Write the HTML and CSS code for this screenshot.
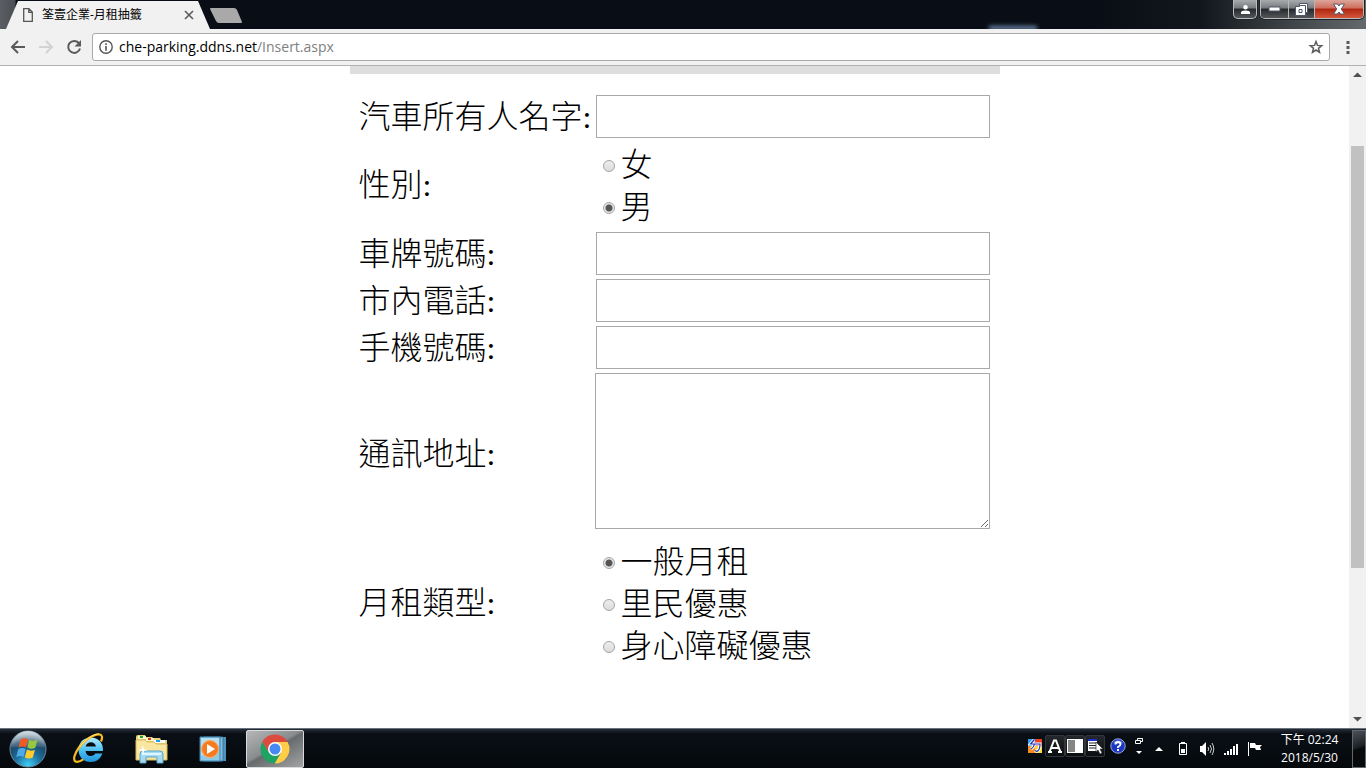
FILE: index.html
```
<!DOCTYPE html>
<html lang="zh-Hant">
<head>
	<meta charset="UTF-8">
	<title>筌壹企業-月租抽籤</title>
	<link rel="stylesheet" href="styles.css">
</head>
<body>
	<header class="titlebar">
		<div class="tab">
			<svg class="tab-icon" width="10" height="14" viewBox="0 0 10 14"><path d="M.7.7h5.2l3.4 3.4v9.2H.7zM5.8.8v3.5h3.5" fill="none" stroke="#555" stroke-width="1.3"/></svg>
			<span class="tab-title">筌壹企業-月租抽籤</span>
			<button class="tab-close" aria-label="關閉分頁"><svg width="10" height="10" viewBox="0 0 10 10"><path d="M1 1l8 8M9 1L1 9" stroke="#5a5a5a" stroke-width="1.6"/></svg></button>
		</div>
		<button class="new-tab" aria-label="新分頁"><svg width="34" height="17" viewBox="0 0 34 17"><path d="M1 1h23q2 0 3 2l5 12q0 1-1 1H9q-2 0-3-2L0 2q0-1 1-1z" fill="#a9a9a9"/></svg></button>
		<div class="glow"></div>
		<button class="win user" aria-label="使用者"><svg width="11" height="11" viewBox="0 0 11 11"><path d="M5.500 1a2.300 2.300 0 0 1 0 4.600A2.300 2.300 0 0 1 5.500 1zM1 10V8.500Q1 6.500 5.500 6.500T10 8.500V10z" fill="#fff"/></svg></button>
		<div class="win-group">
			<button class="win" aria-label="最小化"><svg width="13" height="6" viewBox="0 0 13 6"><path d="M1 1h11v4H1z" fill="#fff" stroke="#535669"/></svg></button>
			<button class="win" aria-label="還原"><svg width="13" height="13" viewBox="0 0 13 13"><path d="M4.500.500h8v9h-2v3h-10v-9h4z" fill="#fff" stroke="#535669"/><path d="M4 6.500h3v3H4zM4.500 2.500h6v7" fill="none" stroke="#535669"/></svg></button>
			<button class="win close" aria-label="關閉"><svg width="14" height="12" viewBox="0 0 14 12"><path d="M1.500 1h4L7 3l1.500-2h4L9.300 6l3.200 5h-4L7 9l-1.500 2h-4l3.200-5z" fill="#fff" stroke="#535669"/></svg></button>
		</div>
	</header>

	<nav class="toolbar">
		<button aria-label="上一頁"><svg width="16" height="16" viewBox="0 0 16 16"><path d="M15 8H2.500M8 2L2 8l6 6" fill="none" stroke="#5a5a5a" stroke-width="2"/></svg></button>
		<button aria-label="下一頁" disabled><svg width="16" height="16" viewBox="0 0 16 16"><path d="M1 8h12.500M8 2l6 6-6 6" fill="none" stroke="#d3d3d3" stroke-width="2"/></svg></button>
		<button aria-label="重新載入"><svg width="16" height="16" viewBox="0 0 16 16"><path d="M12.800 4A6 6 0 1 0 14 9.500" fill="none" stroke="#5a5a5a" stroke-width="2"/><path d="M15 1v6.500H8.500z" fill="#5a5a5a"/></svg></button>
		<div class="omnibox">
			<svg width="14" height="14" viewBox="0 0 14 14"><circle cx="7" cy="7" r="6.200" fill="none" stroke="#555" stroke-width="1.400"/><path d="M6.200 3.300h1.600v1.600H6.200zM6.200 6h1.600v4.700H6.200z" fill="#555"/></svg>
			<div class="url" role="textbox" aria-label="網址" contenteditable="true" spellcheck="false">che-parking.ddns.net<span class="path">/Insert.aspx</span></div>
			<button aria-label="加入書籤"><svg width="16" height="16" viewBox="0 0 16 16"><path d="M8 2.500l1.500 3.900 4.200.3-3.200 2.600 1 4L8 11l-3.500 2.300 1-4-3.200-2.600 4.200-.3z" fill="none" stroke="#5a5a5a" stroke-width="1.500"/></svg></button>
		</div>
		<button class="menu" aria-label="選單"><svg width="4" height="14" viewBox="0 0 4 14"><path d="M.500 1h3v3h-3zM.500 6h3v3h-3zM.500 11h3v3h-3z" fill="#5a5a5a"/></svg></button>
	</nav>

	<div class="viewport">
		<main>
			<form class="panel">
				<label for="owner">汽車所有人名字:</label>
				<input type="text" id="owner">

				<span class="caption" id="sex">性別:</span>
				<div class="options" role="radiogroup" aria-labelledby="sex">
					<label><input type="radio" name="sex">女</label>
					<label><input type="radio" name="sex" checked>男</label>
				</div>

				<label for="plate">車牌號碼:</label>
				<input type="text" id="plate">

				<label for="tel">市內電話:</label>
				<input type="text" id="tel">

				<label for="mobile">手機號碼:</label>
				<input type="text" id="mobile">

				<label for="address">通訊地址:</label>
				<textarea id="address"></textarea>

				<span class="caption" id="rent">月租類型:</span>
				<div class="options" role="radiogroup" aria-labelledby="rent">
					<label><input type="radio" name="rent" checked>一般月租</label>
					<label><input type="radio" name="rent">里民優惠</label>
					<label><input type="radio" name="rent">身心障礙優惠</label>
				</div>
			</form>
		</main>
		<div class="scrollbar">
			<svg width="17" height="17" viewBox="0 0 17 17"><path d="M4 11l4.500-4.500L13 11z" fill="#505050"/></svg>
			<div class="track"><div class="thumb"></div></div>
			<svg width="17" height="17" viewBox="0 0 17 17"><path d="M4 6l4.500 4.500L13 6z" fill="#505050"/></svg>
		</div>
	</div>

	<footer class="taskbar">
		<button class="start" aria-label="開始">
			<svg width="38" height="38" viewBox="0 0 38 38">
				<defs>
					<radialGradient id="orb" cx=".5" cy=".95" r=".9"><stop offset="0" stop-color="#3fd0f5"/><stop offset=".4" stop-color="#1d6f9f"/><stop offset=".75" stop-color="#1c4565"/><stop offset="1" stop-color="#8ba5b5"/></radialGradient>
					<linearGradient id="gloss" x2="0" y2="1"><stop offset="0" stop-color="#fff" stop-opacity=".6"/><stop offset="1" stop-color="#fff" stop-opacity=".1"/></linearGradient>
				</defs>
				<circle cx="19" cy="19" r="18" fill="url(#orb)" stroke="#6d8899"/>
				<path d="M2 18a17 17 0 0 1 34 0q-17-5-34 0z" fill="url(#gloss)"/>
				<path d="M11.500 9.500q4-2.500 7.500-.3L17 17.500q-3.500-2-7.500.3z" fill="#ef5a25"/>
				<path d="M20.200 9.800q4 2 8.300-.3l-2.200 8.200q-4 2.300-8-.1z" fill="#97c93c"/>
				<path d="M9.200 19.300q4-2.200 7.500-.3l-2.200 8q-3.500-2-7.300.2z" fill="#4fa8e8"/>
				<path d="M18 19.500q4 2.200 8 .2l-2.200 7.800q-4 2.300-8-.2z" fill="#ffcb2f"/>
			</svg>
		</button>
		<button aria-label="Internet Explorer">
			<svg width="34" height="34" viewBox="0 0 34 34">
				<defs><linearGradient id="ie" x2="0" y2="1"><stop offset="0" stop-color="#b5ecff"/><stop offset=".5" stop-color="#4fc3f3"/><stop offset="1" stop-color="#1e92dc"/></linearGradient></defs>
				<path d="M31 19H13.500c.3 3 2.300 5 5.300 5 2.200 0 3.700-1 4.500-2.500h7C28.700 26.700 24.500 30 18.700 30 11.700 30 6.500 25 6.500 17.700S11.700 5.500 18.700 5.500C26.500 5.500 31.500 11 31 19zM13.600 14.500h10.300c-.3-2.500-2.300-4.200-5-4.200s-4.700 1.700-5.300 4.200z" fill="url(#ie)"/>
				<path d="M29 9.500c2-4.500 1-7-2-7.200C21.500 2 12.500 8 7 15.500 2.500 21.500.800 27.500 3.300 29.300c1.700 1.200 4.700.2 8-2" fill="none" stroke="#f8ba1c" stroke-width="2.200"/>
				<path d="M27 2C21 2 12.500 8 7.500 15" fill="none" stroke="#ffe56b"/>
			</svg>
		</button>
		<button aria-label="檔案總管">
			<svg width="34" height="32" viewBox="0 0 34 32">
				<path d="M2 4q0-2 2-2h7l1 2h6l1 1h7l1 2h6v20H2z" fill="#e8cf7b"/>
				<path d="M4 3h8v3H4z" fill="#fff6c9"/><path d="M6 3h3v2H6z" fill="#19a52c"/>
				<path d="M12 5h8v3h-8z" fill="#fff6c9"/><path d="M14 5h3v2h-3z" fill="#d53a23"/>
				<path d="M20 7h11v3H20z" fill="#fff"/><path d="M22 7h4v2h-4z" fill="#229ded"/>
				<path d="M2 7h9l2 2h7l2 2h11v16H2z" fill="#f9e6a0" stroke="#d8b95c"/>
				<path d="M6 30V21q0-3 3-3h17q3 0 3 3v9h-6v-6H12v6z" fill="#a5daf3" stroke="#5aa3cc"/>
				<path d="M8 20h19v2H8z" fill="#e0f6ff"/>
				<path d="M9 12l1 4 4 1-4 1-1 4-1-4-4-1 4-1z" fill="#fff"/>
			</svg>
		</button>
		<button aria-label="媒體播放程式">
			<svg width="28" height="26" viewBox="0 0 28 26">
				<path d="M7 1h20v24H7z" fill="#4e94bb"/>
				<path d="M5 1h19v24H5z" fill="#84bedc" stroke="#3679a3"/>
				<path d="M1 1h20v24H1z" fill="#8ecae6" stroke="#3c84af"/>
				<path d="M2 2h18v8L2 20z" fill="#b7dff0"/>
				<circle cx="11" cy="13" r="8.500" fill="#f47b20" stroke="#ffae67"/>
				<path d="M8 8l8 5-8 5z" fill="#fff"/>
			</svg>
		</button>
		<button class="active" aria-label="Google Chrome">
			<svg width="30" height="30" viewBox="0 0 30 30">
				<path d="M15 15L2.400 7.700A14.500 14.500 0 0 1 27.600 8H15z" fill="#dd4b3e"/>
				<path d="M27.600 8A14.500 14.500 0 0 1 14.500 29.500L21 18.500 15 8z" fill="#ffcd46"/>
				<path d="M2.400 7.700A14.500 14.500 0 0 0 14.500 29.500L21 18.500 9 18.500z" fill="#1da362"/>
				<path d="M2.400 7.700L9 18.500 15 8z" fill="#dd4b3e"/>
				<circle cx="15" cy="15" r="7" fill="#fff"/>
				<circle cx="15" cy="15" r="5.500" fill="#4688f4"/>
			</svg>
		</button>

		<div class="langbar">
			<button aria-label="輸入法"><svg width="14" height="14" viewBox="0 0 14 14"><path d="M0 0h7v7H0z" fill="#2f9ff5"/><path d="M7 0h7v7H7z" fill="#f04022"/><path d="M0 7h7v7H0z" fill="#f58a1f"/><path d="M7 7h7v7H7z" fill="#ffd82e"/><path d="M6 1L2.500 5H12q0 6-3 7.500L7 11.500M6.500 5Q6 8 3 10" fill="none" stroke="#fff" stroke-width="3"/><path d="M6 1L2.500 5H12q0 6-3 7.500L7 11.500M6.500 5Q6 8 3 10" fill="none" stroke="#1a35b8" stroke-width="1.200"/></svg></button>
			<button class="boxed" aria-label="英數"><svg width="14" height="14" viewBox="0 0 14 14"><path d="M1.500 13L6 1.500h2L12.500 13M3.500 9h7M0 13h4M10 13h4" fill="none" stroke="#fff" stroke-width="2"/></svg></button>
			<button class="boxed" aria-label="半形"><svg width="16" height="14" viewBox="0 0 16 14"><path d="M0 0h16v14H0z" fill="#fff"/><path d="M1 1h7v12H1z" fill="#858585"/></svg></button>
			<button class="boxed" aria-label="功能表"><svg width="16" height="16" viewBox="0 0 16 16"><path d="M1 1h9v12H1z" fill="#fff"/><path d="M1 2h9" stroke="#1d32c4" stroke-width="2"/><path d="M2 5h7M2 7.500h7M2 10h7" stroke="#222"/><path d="M9 4v10l2-2 2 4 2-1-2-4h3z" fill="#fff" stroke="#333" stroke-width=".7"/></svg></button>
			<button class="help" aria-label="說明"><svg width="16" height="16" viewBox="0 0 16 16"><circle cx="8" cy="8" r="7.200" fill="#1a37c4" stroke="#9ba9d8"/><path d="M3 5a6 6 0 0 1 10 0q-5 2-10 0z" fill="#5c73dc"/><path d="M5.500 6.500Q5.500 4 8 4t2.500 2.200Q10.500 7.500 8 9v1M8 11v2" fill="none" stroke="#fff" stroke-width="1.900"/></svg></button>
			<button class="restore" aria-label="還原語言列"><svg width="10" height="18" viewBox="0 0 10 18"><path d="M3.500 3.500v-2h5v3h-2M1.500 3.500h5v3h-5z" fill="none" stroke="#fff"/><path d="M2 14h6l-3 3z" fill="#fff"/></svg></button>
		</div>
		<div class="tray">
			<button aria-label="顯示隱藏的圖示"><svg width="8" height="4" viewBox="0 0 8 4"><path d="M0 4l4-4 4 4z" fill="#fff"/></svg></button>
			<button aria-label="電池"><svg width="10" height="14" viewBox="0 0 10 14"><path d="M3 0h4v2H3zM3 7h4v4H3z" fill="#fff"/><path d="M1.500 1.500h7v11h-7z" fill="none" stroke="#fff"/></svg></button>
			<button aria-label="音量"><svg width="15" height="14" viewBox="0 0 15 14"><path d="M0 4h2l4-4v14l-4-4H0z" fill="#fff"/><path d="M8 5q1.500 2 0 4M10 3q3 4 0 8M12 1q3.500 6 0 12" fill="none" stroke="#ccc"/></svg></button>
			<button aria-label="網路"><svg width="14" height="12" viewBox="0 0 14 12"><path d="M0 10h2v2H0zM3 8h2v4H3zM6 6h2v6H6zM9 3h2v9H9zM12 1h2v11h-2z" fill="#fff"/></svg></button>
			<button aria-label="重要訊息"><svg width="14" height="14" viewBox="0 0 14 14"><path d="M0 0h1v14H0zM2 1h5l1 2h6l-2 2 1 3H8L7 6H2z" fill="#fff"/></svg></button>
		</div>
		<div class="clock"><span>下午 02:24</span><span>2018/5/30</span></div>
		<button class="desktop" aria-label="顯示桌面"></button>
	</footer>
</body>
</html>
```
FILE: styles.css
```
* {
	box-sizing: border-box;
}

body {
	margin: 0;
	height: 100vh;
	display: flex;
	flex-direction: column;
	overflow: hidden;
	font-family: "Open Sans", "Noto Sans CJK TC", sans-serif;
	background: #fff;
}

button {
	display: flex;
	align-items: center;
	justify-content: center;
	padding: 0;
	border: 0;
	background: none;
}

svg {
	display: block;
	flex: none;
}

/* title bar */
.titlebar {
	display: flex;
	flex: none;
	align-items: flex-start;
	height: 29px;
	padding: 0 2px 0 6px;
	overflow: hidden;
	background: linear-gradient(to right, #5b5f63, #4a4e52 15px, transparent 16px), linear-gradient(to right, #090e16 80%, #12171d 88%, #43484c 95%, #64696c);
}

.tab {
	display: flex;
	align-items: center;
	width: 204px;
	height: 29px;
	padding: 0 16px 0 17px;
	background: #f2f1f2;
	clip-path: polygon(0 100%, 12px 1px, 192px 1px, 100% 100%);
}

.tab-title {
	flex: 1;
	margin-left: 9px;
	font-size: 12px;
	line-height: 16px;
	color: #000;
}

.new-tab {
	margin-top: 7px;
}

.glow {
	width: 48px;
	height: 4px;
	margin: 26px 196px 0 auto;
	background: #6d8cad;
	filter: blur(2px);
}

.win {
	width: 26px;
	height: 18px;
	background: linear-gradient(#a8abad, #77797c 45%, #25282c 50%, #55585b);
	border-right: 1px solid #b5b7b9;
}

.user, .win-group {
	height: 19px;
	border: 1px solid #b9bbbc;
	border-top: 0;
	border-radius: 0 0 5px 5px;
	box-shadow: 0 0 0 1px #202327;
}

.user {
	width: 24px;
	margin-right: 3px;
}

.win-group {
	display: flex;
	overflow: hidden;
}

.win-group .win:first-child {
	width: 28px;
}

.win-group .close {
	width: 48px;
	border-right: 0;
	background: linear-gradient(#dda59a, #cf6e5c 45%, #b02610 50%, #d4573c);
}

/* toolbar */
.toolbar {
	display: flex;
	flex: none;
	align-items: center;
	height: 37px;
	padding: 0 10px;
	border-bottom: 1px solid #b2b2b2;
	background: #f2f1f2;
}

.toolbar > button {
	width: 16px;
	margin-right: 12px;
}

.omnibox {
	display: flex;
	flex: 1;
	align-items: center;
	height: 28px;
	margin-left: -2px;
	padding: 0 5px 0 6px;
	border: 1px solid #a9a9a9;
	border-radius: 3px;
	background: #fff;
}

.url {
	flex: 1;
	margin-left: 6px;
	font-size: 14px;
	line-height: 20px;
	color: #000;
	outline: 0;
}

.path {
	color: #808080;
}

.toolbar .menu {
	margin: 0 0 0 10px;
}

/* page */
.viewport {
	display: flex;
	flex: 1;
	min-height: 0;
}

main {
	flex: 1;
	overflow: hidden;
}

.panel {
	display: grid;
	grid-template-columns: max-content 1fr;
	gap: 4px;
	align-items: center;
	max-width: 650px;
	margin: 0 auto;
	padding: 21px 10px 0 9px;
	border-top: 8px solid #ddd;
	font-family: "Liberation Serif", "Noto Sans CJK TC", serif;
	font-size: 32px;
	font-weight: 300;
	line-height: 42px;
	white-space: nowrap;
	color: #000;
}

.panel input[type="text"] {
	min-width: 0;
	height: 43px;
	margin-left: 1px;
	padding: 1px 2px;
	border: 1px solid #a9a9a9;
	font: inherit;
}

textarea {
	min-width: 0;
	height: 156px;
	margin: 0 0 6px;
	padding: 2px;
	border: 1px solid #a9a9a9;
	font: inherit;
	resize: both;
}

.options {
	padding: 2px 0 0 8px;
}

.options label {
	display: flex;
	align-items: center;
}

.options input {
	appearance: none;
	width: 12px;
	height: 12px;
	margin: 2px 5px 0 0;
	border: 1px solid #a5a5a5;
	border-radius: 50%;
	background: linear-gradient(#ededed, #dcdcdc);
}

.options input:checked {
	background: radial-gradient(circle, #555 3px, #e6e6e6 4px);
}

.scrollbar {
	display: flex;
	flex-direction: column;
	width: 17px;
	background: #f1f1f1;
}

.track {
	flex: 1;
	display: grid;
	grid-template-rows: 63fr 422fr 143fr;
}

.thumb {
	grid-row: 2;
	margin: 0 2px;
	background: #c1c1c1;
}

/* taskbar */
.taskbar {
	display: flex;
	flex: none;
	align-items: center;
	gap: 4px;
	height: 40px;
	border-top: 1px solid #69737d;
	background: linear-gradient(#252c36, #0a0f16 5px, #05090c);
}

.taskbar > button {
	width: 58px;
	height: 38px;
}

.taskbar > .start {
	width: 56px;
}

.taskbar > .active {
	border: 1px solid #d8dadb;
	border-radius: 2px;
	background: linear-gradient(150deg, #b5b7b8, #898c8e 45%, #686b6d 50%, #a2a4a5);
}

.langbar {
	display: flex;
	align-items: center;
	margin: 0 -4px 6px auto;
}

.langbar button {
	width: 20px;
	height: 22px;
}

.langbar .boxed {
	border: 1px solid #33373a;
	border-radius: 2px;
	background: linear-gradient(#24282c, #0b0e11);
}

.langbar .help {
	width: 26px;
}

.langbar .restore {
	width: 16px;
}

.tray {
	display: flex;
	margin: 0 -4px 0 0;
}

.tray button {
	width: 24px;
	height: 24px;
}

.clock {
	display: flex;
	flex-direction: column;
	align-items: center;
	width: 85px;
	margin-right: -4px;
	font-size: 12px;
	line-height: 18px;
	color: #fff;
}

.taskbar > .desktop {
	width: 14px;
	border: 1px solid #62676c;
	background: linear-gradient(160deg, #4b5157, #1c2024 45%, #07090b 50%);
}
```
